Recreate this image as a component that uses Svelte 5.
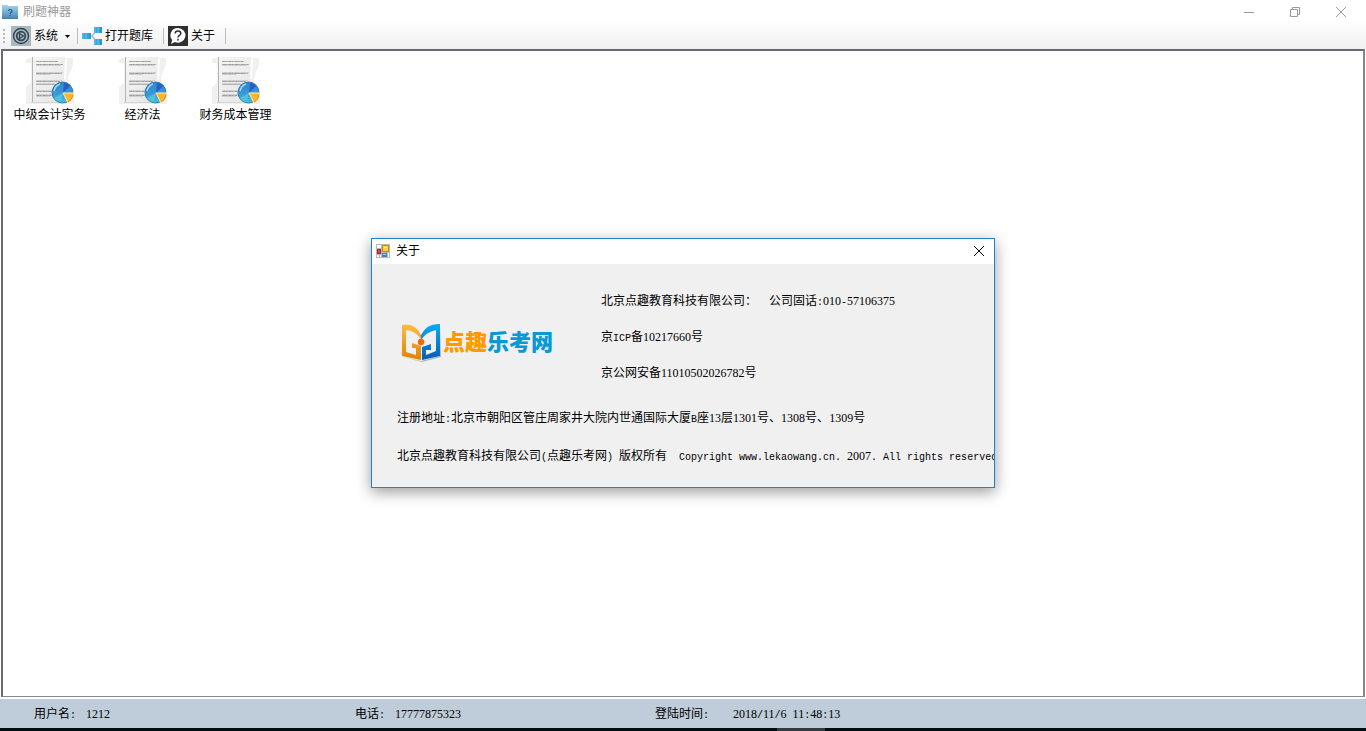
<script>
  const banks = ['中级会计实务', '经济法', '财务成本管理'];

  const status = [
    { label: '用户名:', value: '1212' },
    { label: '电话:', value: '17777875323' },
    { label: '登陆时间:', value: '2018/11/6 11:48:13' }
  ];

  const company = [
    '北京点趣教育科技有限公司：  公司固话:010-57106375',
    '京ICP备10217660号',
    '京公网安备11010502026782号'
  ];

  const legal = [
    '注册地址:北京市朝阳区管庄周家井大院内世通国际大厦B座13层1301号、1308号、1309号',
    '北京点趣教育科技有限公司(点趣乐考网) 版权所有  Copyright www.lekaowang.cn. 2007. All rights reserved.'
  ];

  let selected = $state(null);
  let aboutOpen = $state(true);

  // half-width characters take half of a full-width cell
  function runs(text) {
    return text
      .split(/([0-9]+|[\x20-\x2f\x3a-\x7e]+)/)
      .filter(Boolean)
      .map(part => ({
        part,
        kind: /^[0-9]/.test(part) ? 'digits' : /^[\x20-\x7e]/.test(part) ? 'half' : 'full'
      }));
  }
</script>

{#snippet cells(text)}{#each runs(text) as run}<span class={run.kind}>{run.part}</span>{/each}{/snippet}

<div class="window">
  <header class="titlebar">
    <svg class="app-icon" width="16" height="16" viewBox="0 0 16 16">
      <defs>
        <linearGradient id="folder" x1="0" y1="0" x2="0" y2="1">
          <stop offset="0" stop-color="#a9d3ee" />
          <stop offset="1" stop-color="#4386b8" />
        </linearGradient>
      </defs>
      <path d="M0 1h6v1h10v13H0z" fill="url(#folder)" />
      <path d="M0 14.500h16" stroke="#4a80a8" />
      <path d="M6.500 7q0-1.500 1.700-1.500T10 7q0 1-1 1.500T8 10M8 11v1.200" fill="none" stroke="#205b88" stroke-width="1.200" />
    </svg>
    <h1>刷题神器</h1>
    <div class="controls">
      <button aria-label="最小化">
        <svg width="12" height="12" viewBox="0 0 12 12"><path d="M1 6.500h10" /></svg>
      </button>
      <button aria-label="还原">
        <svg width="12" height="12" viewBox="0 0 12 12"><path d="M1.500 3.500h7v7h-7zM3.500 3.500v-2h7v7h-2" /></svg>
      </button>
      <button aria-label="关闭">
        <svg width="12" height="12" viewBox="0 0 12 12"><path d="M1 1l10 10M11 1L1 11" /></svg>
      </button>
    </div>
  </header>

  <nav class="toolbar">
    <span class="grip"></span>
    <button class="tool">
      <svg width="20" height="20" viewBox="0 0 20 20">
        <path d="M0 0h20v20H0z" fill="#a9b8bf" />
        <circle cx="10" cy="10" r="7.500" fill="none" stroke="#2f4450" stroke-width="1.400" />
        <circle cx="10" cy="10" r="4.300" fill="none" stroke="#2f4450" stroke-width="1.700" />
        <path d="M8.500 7.500v5l4-2.500z" fill="none" stroke="#2f4450" stroke-width="1.200" />
      </svg>
      <span>系统</span>
      <svg class="arrow" width="5" height="3" viewBox="0 0 5 3"><path d="M0 0h5L2.500 3z" /></svg>
    </button>
    <span class="divider"></span>
    <button class="tool">
      <svg width="20" height="20" viewBox="0 0 20 20">
        <path d="M8 10h2l5-6M10 10l5 6" fill="none" stroke="#a8b4ba" stroke-width="1.200" />
        <path d="M0 7h9v6H0zM12 1h8v6h-8zM12 13h8v6h-8z" fill="#36a5dc" />
        <path d="M1 7v6M4 7v6M13 1v6M16 1v6M13 13v6M16 13v6" stroke="#69c3ed" />
        <path d="M8 7v6M19 1v6M19 13v6" stroke="#2388bd" />
      </svg>
      <span>打开题库</span>
    </button>
    <span class="divider"></span>
    <button class="tool" onclick={() => (aboutOpen = true)}>
      <svg width="20" height="20" viewBox="0 0 20 20">
        <path d="M0 0h20v20H0z" fill="#302f31" />
        <path d="M10 2a7.500 7.300 0 1 1-3 14l-4 2 1.200-4A7.500 7.300 0 0 1 10 2z" fill="#fff" />
        <path d="M7.200 7.600Q7.200 5 10 5t2.800 2.400c0 2-2.800 2-2.800 4M10 12.800v1.800" fill="none" stroke="#302f31" stroke-width="1.500" />
      </svg>
      <span>关于</span>
    </button>
    <span class="divider"></span>
  </nav>

  <main class="banks">
    {#each banks as bank}
      <button class="bank" class:selected={selected === bank} onclick={() => (selected = bank)}>
        <svg width="48" height="48" viewBox="0 0 48 48">
          <defs>
            <linearGradient id="sheet" x1="0" y1="0" x2="1" y2="1">
              <stop offset="0" stop-color="#f6f6f6" />
              <stop offset="1" stop-color="#e4e4e4" />
            </linearGradient>
            <linearGradient id="pie" x1="0" y1="0" x2="0" y2="1">
              <stop offset="0" stop-color="#2f83cc" />
              <stop offset="0.600" stop-color="#3a9bd9" />
              <stop offset="1" stop-color="#45c0dc" />
            </linearGradient>
          </defs>
          <path d="M0 2q8-3 18-1h29v7l-5 12 1 12 5 4v11H0V30l5-4V6H0z" fill="#f0f0f0" />
          <path d="M38 2h3l-1 19-2 2z" fill="#fff" />
          <path d="M6 0h33l-1 24 4 22H6z" fill="url(#sheet)" />
          <path d="M6.500 0v46" stroke="#b5b5b5" />
          <path d="M5 45.500h38" stroke="#d5d5d5" />
          <g fill="none">
            <path d="M10 4.500h22M10 7.500h27M10 16.500h26M10 24.500h24M10 27.500h20M10 34.500h17M10 38.500h18" stroke="#b4b4b4" />
            <path d="M11 4.500h20M11 7.500h25M11 16.500h24M11 24.500h22M11 34.500h15M11 38.500h14" stroke="#9b9b9b" stroke-dasharray="2 1 1 2" />
            <path d="M10 8.500h25M10 15.500h27M10 17.500h14M10 23.500h26M10 26.500h19M10 33.500h17M10 37.500h17M10 39.500h14" stroke="#d0d0d0" />
          </g>
          <circle cx="36.500" cy="35.500" r="10.500" fill="url(#pie)" stroke="#3678aa" />
          <path d="M37 36l1-10q4 0 6 3z" fill="#275fc4" />
          <path d="M37 36l-9 5q3 4 7 4z" fill="#4cc3d8" />
          <path d="M28 34q1-5 6-7" fill="none" stroke="#a9dcf6" stroke-width="1.500" />
          <path d="M37 36h11q0 7-6 10z" fill="#f9b52d" stroke="#fff0c2" />
          <path d="M47 38q-1 5-5 7" fill="none" stroke="#e08a20" />
        </svg>
        <span>{bank}</span>
      </button>
    {/each}
  </main>

  <footer class="statusbar">
    {#each status as item}
      <div class="status">
        <span class="label">{@render cells(item.label)}</span>
        <span>{@render cells(item.value)}</span>
      </div>
    {/each}
  </footer>
  <div class="taskbar"><span></span></div>

  {#if aboutOpen}
    <div class="layer">
      <section class="dialog" role="dialog" aria-labelledby="about-title">
        <header class="dialog-title">
          <svg width="14" height="14" viewBox="0 0 14 14">
            <path d="M0 0h14v14H0z" fill="#b9b9b9" />
            <path d="M1 1h4v3H1zM1 11h2v2H1zM4 11h1v2H4zM12 9h1v4h-1z" fill="#fff" />
            <path d="M6.500 1.500h6v6h-6z" fill="#fbd04b" stroke="#c48a0c" />
            <path d="M8 3h3v1H8z" fill="#fff0a8" />
            <path d="M1.500 5.500h3v4h-3z" fill="#df5249" stroke="#9b1c1c" />
            <path d="M6 9h5v4H6z" fill="#3f7fe0" />
            <path d="M7 10h3v1H7z" fill="#a9cbfa" />
          </svg>
          <h2 id="about-title">关于</h2>
          <button aria-label="关闭" onclick={() => (aboutOpen = false)}>
            <svg width="12" height="12" viewBox="0 0 12 12"><path d="M1 1l10 10M11 1L1 11" /></svg>
          </button>
        </header>
        <div class="dialog-body">
          <div class="intro">
            <div class="brand">
              <svg width="40" height="40" viewBox="0 0 40 40">
                <defs>
                  <linearGradient id="gold" x1="0" y1="0" x2="0" y2="1">
                    <stop offset="0" stop-color="#ffba49" />
                    <stop offset="1" stop-color="#df8300" />
                  </linearGradient>
                  <linearGradient id="azure" x1="0" y1="0" x2="0" y2="1">
                    <stop offset="0" stop-color="#08adf5" />
                    <stop offset="1" stop-color="#075bb5" />
                  </linearGradient>
                </defs>
                <path d="M2 34l18 4 19-5V4l1 30-19 5z" fill="#8a8a8a" opacity="0.600" />
                <path d="M1 2Q14-1 20 12v4Q15 8 5 7v22l10 3v-7h-4v-5l9 3v14L1 33z" fill="url(#gold)" />
                <path d="M39 1Q26 0 20 12v5Q25 9 35 7v21l-10 4v-5h5v-6l-9 3v13l18-4z" fill="url(#azure)" />
                <circle cx="20" cy="19" r="3.200" fill="#f4640b" />
              </svg>
              <strong>点趣<em>乐考网</em></strong>
            </div>
            <div class="company">
              {#each company as line}
                <p>{@render cells(line)}</p>
              {/each}
            </div>
          </div>
          <div class="legal">
            {#each legal as line}
              <p>{@render cells(line)}</p>
            {/each}
          </div>
        </div>
      </section>
    </div>
  {/if}
</div>

<style>
:global(body) {
  margin: 0;
}
.window {
  position: relative;
  display: flex;
  flex-direction: column;
  height: 100vh;
  overflow: hidden;
  background: #fff;
  color: #000;
  font-family: "Liberation Sans", "Noto Sans CJK SC", sans-serif;
  font-size: 12px;
  line-height: 14px;
}
h1, h2, p {
  margin: 0;
  font-size: 12px;
  font-weight: 400;
}
button {
  padding: 0;
  border: none;
  background: none;
  color: inherit;
  font: inherit;
}
svg {
  display: block;
  flex: none;
}
.half {
  font-family: "Liberation Mono", monospace;
  font-size: 10px;
  white-space: pre;
}
.digits {
  font-family: "Liberation Serif", serif;
}

.titlebar {
  display: flex;
  align-items: center;
  height: 23px;
  padding: 0 2px;
  color: #999;
}
.app-icon {
  margin-right: 5px;
}
.controls {
  display: flex;
  height: 20px;
  margin-left: auto;
}
.controls button {
  display: grid;
  place-items: center;
  width: 46px;
}
.controls svg {
  fill: none;
  stroke: #999;
}

.toolbar {
  display: flex;
  align-items: center;
  height: 26px;
  padding-left: 3px;
  background: linear-gradient(#fdfdfd, #f0f0f0);
}
.grip {
  width: 2px;
  height: 15px;
  margin-right: 6px;
  background: repeating-linear-gradient(#b8b8b8 0 2px, transparent 2px 4px);
}
.tool {
  display: flex;
  align-items: center;
  gap: 3px;
  height: 22px;
}
.arrow {
  margin: 0 5px 0 4px;
}
.divider {
  width: 1px;
  height: 16px;
  margin: 0 4px 0 10px;
  background: #bdbdbd;
}
.tool:has(.arrow) + .divider {
  margin-left: 2px;
}

.banks {
  flex: 1;
  display: flex;
  flex-wrap: wrap;
  align-content: flex-start;
  padding-top: 6px;
  border: 1px solid #828790;
  border-width: 2px 2px 1px;
  border-color: #696b70 #828790 #828790 #696b70;
  margin: 0 1px;
  overflow: hidden;
}
.bank {
  display: flex;
  flex-direction: column;
  align-items: center;
  gap: 3px;
  width: 93px;
}
.bank.selected span {
  background: #cce8ff;
}

.statusbar {
  display: flex;
  align-items: center;
  height: 27px;
  margin-top: 2px;
  padding: 2px 0 0 34px;
  background: #bfccd9;
}
.status {
  display: flex;
  gap: 10px;
  width: 300px;
}
.status:first-child {
  width: 321px;
}
.status:last-child .label {
  width: 68px;
}
.taskbar {
  display: flex;
  justify-content: center;
  height: 3px;
  background: #020a12;
}
.taskbar span {
  width: 48px;
  margin-left: 236px;
  background: #333a42;
}

.layer {
  position: absolute;
  inset: 0 0 5px;
  display: grid;
  place-items: center;
  pointer-events: none;
}
.dialog {
  box-sizing: border-box;
  width: 624px;
  max-width: 100%;
  border: 1px solid #1883d7;
  background: #f0f0f0;
  box-shadow: 0 4px 14px rgba(0, 0, 0, 0.4);
  pointer-events: auto;
}
.dialog-title {
  display: flex;
  align-items: center;
  gap: 6px;
  height: 24px;
  padding: 0 9px 1px 4px;
  background: #fff;
}
.dialog-title button {
  margin-left: auto;
}
.dialog-title button svg {
  fill: none;
  stroke: #000;
}
.dialog-body {
  padding: 30px 0 24px 25px;
  overflow: hidden;
}
.dialog-body p {
  height: 14px;
  white-space: pre;
}
.intro {
  display: flex;
}
.brand {
  display: flex;
  align-items: center;
  gap: 2px;
  width: 200px;
  padding: 12px 0 0 4px;
}
.brand strong {
  color: #ff9900;
  font-size: 22px;
  font-weight: 900;
  line-height: 24px;
  white-space: nowrap;
}
.brand em {
  color: #0899d5;
  font-style: normal;
}
.company {
  display: flex;
  flex-direction: column;
  gap: 22px;
}
.legal {
  display: flex;
  flex-direction: column;
  gap: 24px;
  margin-top: 31px;
}
</style>
